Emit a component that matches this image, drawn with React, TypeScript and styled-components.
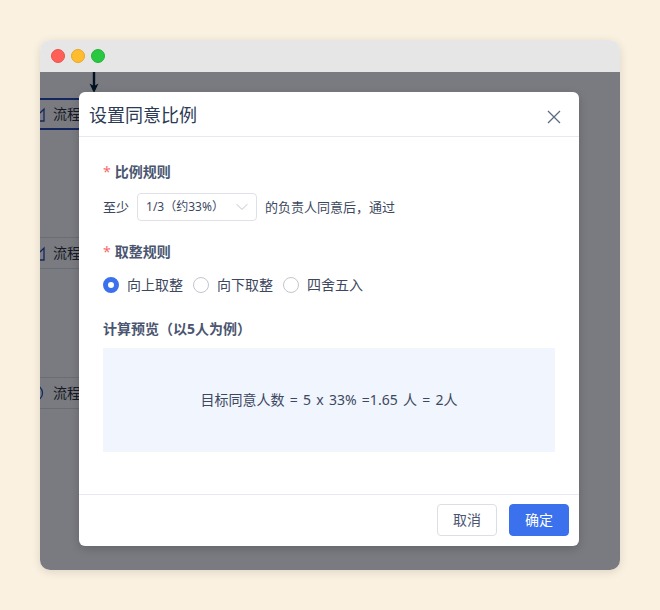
import styled, { createGlobalStyle } from "styled-components";
import { ChevronDown } from "lucide-react";

const GlobalStyle = createGlobalStyle`
  html, body {
    margin: 0;
    padding: 0;
    background: #faf1e1;
    font-family: "Noto Sans", "Noto Sans CJK SC", sans-serif;
    line-height: 20px;
  }
`;

const Page = styled.div`
  width: 660px;
  height: 610px;
  padding: 40px;
  box-sizing: border-box;
`;

const Window = styled.div`
  position: relative;
  width: 580px;
  height: 530px;
  border-radius: 10px;
  overflow: hidden;
  background: #fff;
  box-shadow: 0 2px 10px rgb(0 0 0 / 12%);
`;

const TitleBar = styled.div`
  display: flex;
  align-items: center;
  gap: 6px;
  height: 32px;
  padding-left: 11px;
  background: #e6e6e6;
`;

const Dot = styled.span<{ $color: string; $edge: string }>`
  width: 14px;
  height: 14px;
  box-sizing: border-box;
  border-radius: 50%;
  background: ${(p) => p.$color};
  border: 1px solid ${(p) => p.$edge};
`;

const Canvas = styled.div`
  position: relative;
  height: 498px;
  background: #fff;
`;

const FlowNode = styled.div<{ $top: number; $active?: boolean }>`
  position: absolute;
  top: ${(p) => p.$top}px;
  left: -20px;
  display: flex;
  align-items: center;
  gap: 6px;
  width: 200px;
  height: 32px;
  padding-left: ${(p) => (p.$active ? 9 : 10)}px;
  box-sizing: border-box;
  font-size: 14px;
  color: #2e3442;
  background: #fff;
  border: ${(p) => (p.$active ? "2px solid #2a4fb8" : "1px solid #dcdfe6")};
`;

const Arrow = styled.svg`
  position: absolute;
  top: 0;
  left: 47px;
`;

const Overlay = styled.div`
  position: absolute;
  inset: 0;
  background: rgb(0 2 12 / 52%);
`;

const Dialog = styled.div`
  position: absolute;
  top: 20px;
  left: 39px;
  display: flex;
  flex-direction: column;
  width: 500px;
  height: 454px;
  border-radius: 6px;
  background: #fff;
  box-shadow: 0 3px 10px rgb(0 0 0 / 18%);
`;

const DialogHeader = styled.div`
  display: flex;
  align-items: center;
  justify-content: space-between;
  height: 44px;
  padding: 0 18px 0 10px;
  border-bottom: 1px solid #e8e9ef;
`;

const DialogTitle = styled.h2`
  margin: 2px 0 0;
  font-size: 18px;
  font-weight: 400;
  color: #2b3a55;
`;

const CloseButton = styled.button`
  display: flex;
  padding: 0;
  margin-top: 6px;
  border: 0;
  background: none;
  color: #5a6a85;
`;

const DialogBody = styled.div`
  flex: 1;
  display: flex;
  flex-direction: column;
  padding: 26px 24px 0;
`;

const Label = styled.div<{ $gap?: number }>`
  height: 18px;
  margin-top: ${(p) => p.$gap ?? 0}px;
  line-height: 18px;
  font-size: 14px;
  font-weight: 700;
  color: #4a5670;
`;

const Required = styled.span`
  margin-right: 4px;
  font-size: 14px;
  font-weight: 400;
  color: #f76b6b;
`;

const RuleRow = styled.div`
  display: flex;
  align-items: center;
  height: 28px;
  margin-top: 12px;
  font-size: 13px;
  color: #3c4860;
`;

const Select = styled.div`
  display: flex;
  align-items: center;
  justify-content: space-between;
  width: 120px;
  height: 28px;
  margin: 0 8px;
  padding: 0 4px 0 8px;
  box-sizing: border-box;
  border: 1px solid #dfe1e8;
  border-radius: 4px;
  font-size: 12px;
  color: #3c4860;
`;

const SelectArrow = styled(ChevronDown)`
  color: #b4b8c4;
`;

const RadioRow = styled.div`
  display: flex;
  align-items: center;
  gap: 10px;
  height: 18px;
  margin-top: 15px;
  font-size: 14px;
  color: #3c4860;
`;

const RadioItem = styled.label`
  display: flex;
  align-items: center;
  gap: 8px;
`;

const RadioMark = styled.span<{ $checked?: boolean }>`
  width: 16px;
  height: 16px;
  box-sizing: border-box;
  border-radius: 50%;
  border: ${(p) => (p.$checked ? "5px solid #3b71ed" : "1px solid #c4c6ce")};
  background: #fff;
`;

const Preview = styled.div`
  display: flex;
  align-items: center;
  justify-content: center;
  height: 104px;
  margin-top: 10px;
  background: #f1f5fd;
  font-size: 14px;
  word-spacing: 1.6px;
  color: #3c4860;
`;

const DialogFooter = styled.div`
  display: flex;
  align-items: center;
  justify-content: flex-end;
  gap: 12px;
  height: 52px;
  padding: 0 10px 1px;
  box-sizing: border-box;
  border-top: 1px solid #e8e9ef;
`;

const Button = styled.button<{ $primary?: boolean }>`
  width: 60px;
  height: 32px;
  padding: 0;
  box-sizing: border-box;
  border-radius: 4px;
  font: inherit;
  font-size: 14px;
  color: ${(p) => (p.$primary ? "#fff" : "#4a5670")};
  background: ${(p) => (p.$primary ? "#3b71ed" : "#fff")};
  border: 1px solid ${(p) => (p.$primary ? "#3b71ed" : "#dcdee6")};
`;

const NodeIcon = ({ round }: { round?: boolean }) => (
  <svg width="16" height="18" viewBox="0 0 16 18" fill="none" stroke="#2a4fb8" strokeWidth="1.3">
    {round ? <circle cx="4" cy="9" r="7.5" /> : <path d="M2 16h11V4l-4 4M13 8" />}
  </svg>
);

const CloseIcon = () => (
  <svg width="14" height="14" viewBox="0 0 14 14" fill="none" stroke="currentColor" strokeWidth="1.3">
    <path d="M1 1l12 12M13 1L1 13" />
  </svg>
);

const App = () => (
  <Page>
    <GlobalStyle />
    <Window>
      <TitleBar>
        <Dot $color="#ff5f57" $edge="#e8524b" />
        <Dot $color="#febc2e" $edge="#e5a823" />
        <Dot $color="#28c840" $edge="#22b337" />
      </TitleBar>
      <Canvas>
        <Arrow width="14" height="22" viewBox="0 0 14 22" fill="none">
          <path d="M7 0v18" stroke="#03263a" strokeWidth="2.4" />
          <path d="M2.5 11.5L7 21l4.5-9.5L7 14z" fill="#03263a" />
        </Arrow>
        <FlowNode $top={26} $active>
          <NodeIcon />
          流程
        </FlowNode>
        <FlowNode $top={165}>
          <NodeIcon />
          流程
        </FlowNode>
        <FlowNode $top={305}>
          <NodeIcon round />
          流程
        </FlowNode>
        <Overlay />
        <Dialog>
          <DialogHeader>
            <DialogTitle>设置同意比例</DialogTitle>
            <CloseButton>
              <CloseIcon />
            </CloseButton>
          </DialogHeader>
          <DialogBody>
            <Label>
              <Required>*</Required>比例规则
            </Label>
            <RuleRow>
              至少
              <Select>
                1/3（约33%）
                <SelectArrow size={20} strokeWidth={1} />
              </Select>
              的负责人同意后，通过
            </RuleRow>
            <Label $gap={22}>
              <Required>*</Required>取整规则
            </Label>
            <RadioRow>
              <RadioItem>
                <RadioMark $checked />
                向上取整
              </RadioItem>
              <RadioItem>
                <RadioMark />
                向下取整
              </RadioItem>
              <RadioItem>
                <RadioMark />
                四舍五入
              </RadioItem>
            </RadioRow>
            <Label $gap={26}>计算预览（以5人为例）</Label>
            <Preview>目标同意人数 = 5 x 33% =1.65 人 = 2人</Preview>
          </DialogBody>
          <DialogFooter>
            <Button>取消</Button>
            <Button $primary>确定</Button>
          </DialogFooter>
        </Dialog>
      </Canvas>
    </Window>
  </Page>
);

export default App;
